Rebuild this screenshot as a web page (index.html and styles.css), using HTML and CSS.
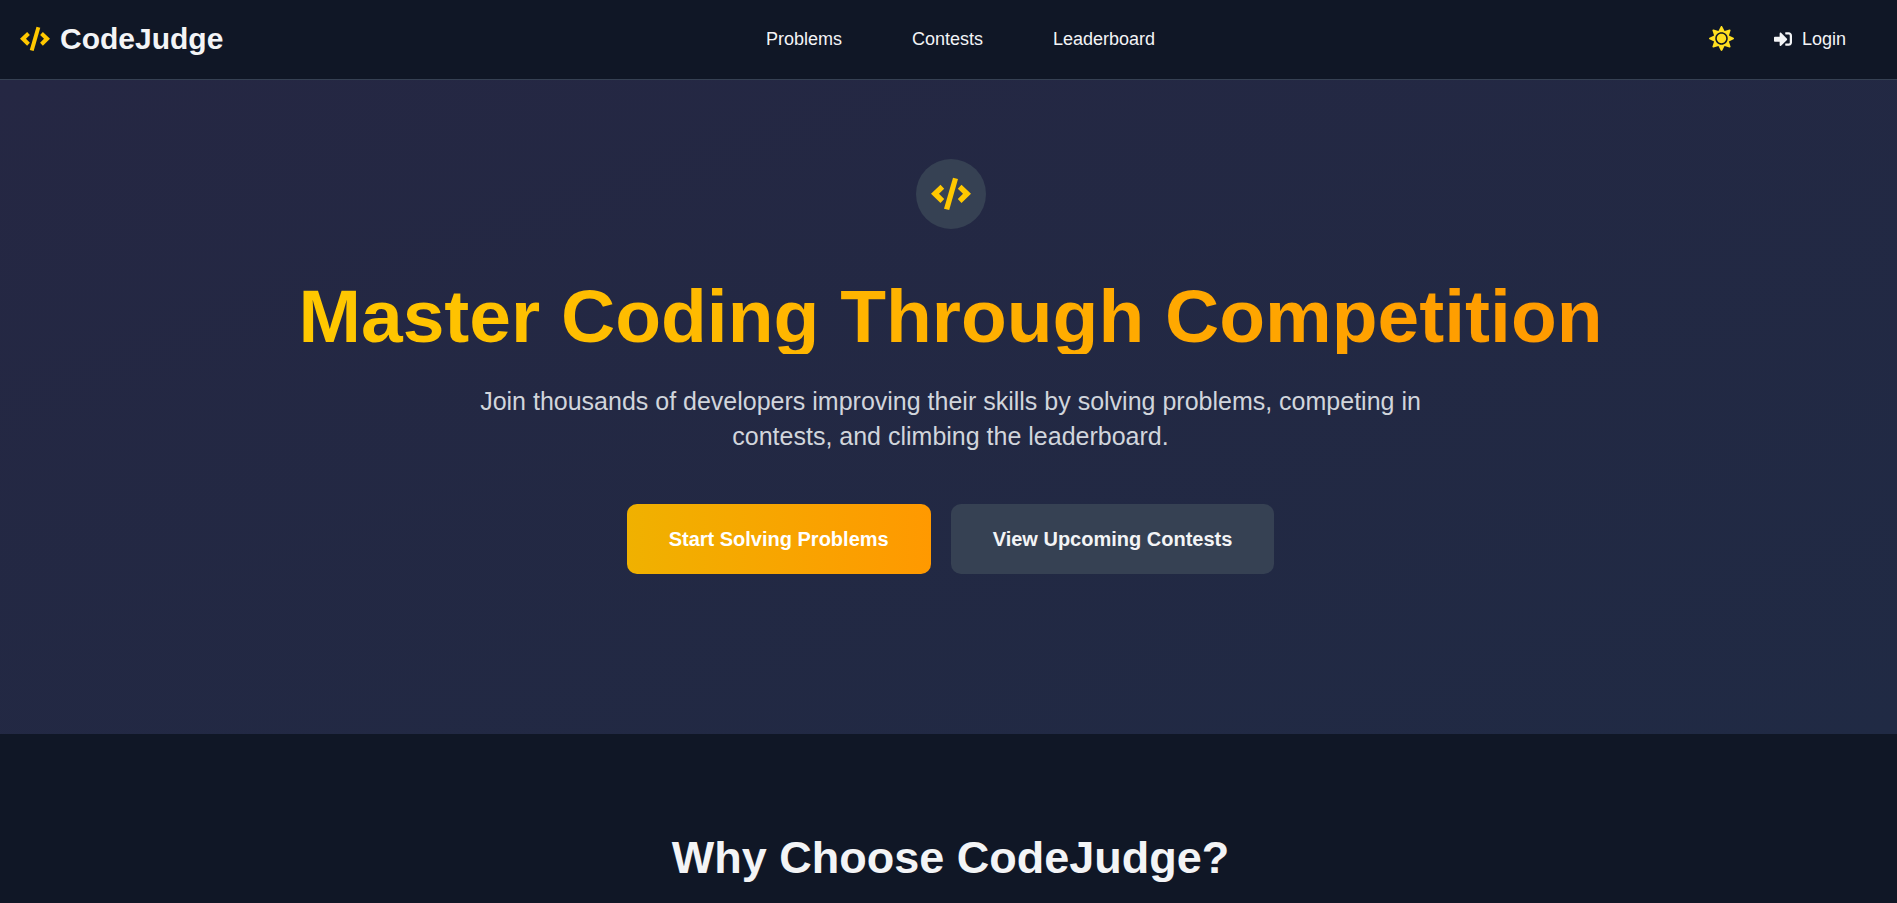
FILE: index.html
```html
<!DOCTYPE html>
<html lang="en">
<head>
<meta charset="utf-8">
<title>CodeJudge</title>
<link rel="stylesheet" href="styles.css">
</head>
<body>
<svg class="sprite" aria-hidden="true">
  <symbol id="code" viewBox="0 0 40 40">
    <path d="M22 3.700L27 5L18.200 36L13 34.700Z"/>
    <path d="M9.500 10.700L13.200 14.700L8 19.700L13.200 25L9.500 29L0 19.800Z"/>
    <path d="M30.500 10.700L26.800 14.700L32 19.700L26.800 25L30.500 29L40 19.800Z"/>
  </symbol>
</svg>
<header class="header">
  <a class="logo" href="#"><svg class="logo-icon" aria-hidden="true"><use href="#code"/></svg>CodeJudge</a>
  <nav class="nav">
    <a href="#">Problems</a>
    <a href="#">Contests</a>
    <a href="#">Leaderboard</a>
  </nav>
  <div class="actions">
    <button class="theme" type="button" aria-label="Toggle theme">
      <svg class="sun" viewBox="0 0 512 512" aria-hidden="true"><path d="M256 160c-52.900 0-96 43.100-96 96s43.100 96 96 96 96-43.100 96-96-43.100-96-96-96zm246.400 80.500l-94.700-47.300 33.500-100.400c4.500-13.600-8.400-26.500-21.900-21.900l-100.400 33.500-47.400-94.800c-6.400-12.800-24.600-12.800-31 0l-47.300 94.700L92.700 70.800c-13.600-4.500-26.500 8.400-21.900 21.900l33.500 100.400-94.700 47.400c-12.800 6.400-12.800 24.600 0 31l94.700 47.300-33.500 100.500c-4.500 13.600 8.400 26.500 21.900 21.900l100.400-33.500 47.300 94.700c6.400 12.800 24.600 12.800 31 0l47.300-94.700 100.400 33.500c13.600 4.500 26.500-8.400 21.900-21.900l-33.500-100.400 94.700-47.300c13-6.500 13-24.700.2-31.100zm-155.900 106c-49.900 49.900-131.100 49.900-181 0-49.900-49.900-49.900-131.100 0-181 49.900-49.900 131.100-49.900 181 0 49.900 49.900 49.900 131.100 0 181z"/></svg>
    </button>
    <a class="login" href="#"><svg class="login-icon" viewBox="0 0 512 512" aria-hidden="true"><path d="M416 448h-84c-6.600 0-12-5.400-12-12v-40c0-6.600 5.400-12 12-12h84c17.700 0 32-14.300 32-32V160c0-17.700-14.300-32-32-32h-84c-6.600 0-12-5.400-12-12V76c0-6.600 5.400-12 12-12h84c53 0 96 43 96 96v192c0 53-43 96-96 96zm-47-201L201 79c-15-15-41-4.500-41 17v96H24c-13.300 0-24 10.700-24 24v96c0 13.300 10.700 24 24 24h136v96c0 21.500 26 32 41 17l168-168c9.300-9.400 9.300-24.600 0-34z"/></svg>Login</a>
  </div>
</header>
<main>
  <section class="hero">
    <div class="badge"><svg class="badge-icon" aria-hidden="true"><use href="#code"/></svg></div>
    <h1 class="title">Master Coding Through Competition</h1>
    <p class="lead">Join thousands of developers improving their skills by solving problems, competing in contests, and climbing the leaderboard.</p>
    <div class="buttons">
      <a class="btn btn-primary" href="#">Start Solving Problems</a>
      <a class="btn btn-secondary" href="#">View Upcoming Contests</a>
    </div>
  </section>
  <section class="why">
    <h2 class="why-title">Why Choose CodeJudge?</h2>
  </section>
</main>
</body>
</html>
```
FILE: styles.css
```css
* { box-sizing: border-box; }
html { overflow-x: hidden; scrollbar-width: none; }
body {
  margin: 0;
  background: #101726;
  color: #f3f4f6;
  font-family: "Liberation Sans", Arial, sans-serif;
  font-size: 20px;
  line-height: 30px;
}
a { color: inherit; text-decoration: none; }
svg { fill: currentColor; }
.sprite { position: absolute; width: 0; height: 0; }

.header {
  display: grid;
  grid-template-columns: 1fr auto 1fr;
  align-items: center;
  height: 80px;
  padding: 0 20px 2px;
  border-bottom: 1px solid #364153;
}
.logo { display: flex; align-items: center; gap: 10px; font-size: 30px; font-weight: 700; }
.logo-icon { width: 30px; height: 30px; color: #ffc800; }
.nav { display: flex; gap: 70px; padding-left: 24px; font-size: 18px; }
.actions { display: flex; justify-content: flex-end; align-items: center; gap: 30px; padding-right: 31px; font-size: 18px; }
.theme { display: flex; padding: 10px; border: 0; background: none; color: #ffdf20; cursor: pointer; }
.sun { width: 25px; height: 25px; }
.login { display: flex; align-items: center; gap: 10px; }
.login-icon { width: 18px; height: 18px; }

.hero {
  display: flex;
  flex-direction: column;
  align-items: center;
  padding: 79px 20px 160px 24px;
  text-align: center;
  background: linear-gradient(to bottom right, #252743, #202a44);
}
.badge { display: flex; padding: 15px; border-radius: 50%; background: #364153; color: #ffc800; }
.badge-icon { width: 40px; height: 40px; }
.title {
  margin: 50px 0 30px;
  font-size: 75px;
  line-height: 75px;
  color: transparent;
  background: linear-gradient(to right, #ffc800, #ff9900);
  -webkit-background-clip: text;
  background-clip: text;
}
.lead { max-width: 960px; margin: 0 0 50px; color: #d1d5dc; font-size: 25px; line-height: 35px; }
.buttons { display: flex; flex-wrap: wrap; justify-content: center; gap: 20px; }
.btn { padding: 20px 42px; border-radius: 10px; font-weight: 700; }
.btn-primary { color: #fff; background: linear-gradient(to right, #f0b100, #ff9900); }
.btn-secondary { background: #364153; }

.why { padding: 99px 20px 100px 24px; text-align: center; }
.why-title { margin: 0; font-size: 45px; line-height: 50px; }
```
